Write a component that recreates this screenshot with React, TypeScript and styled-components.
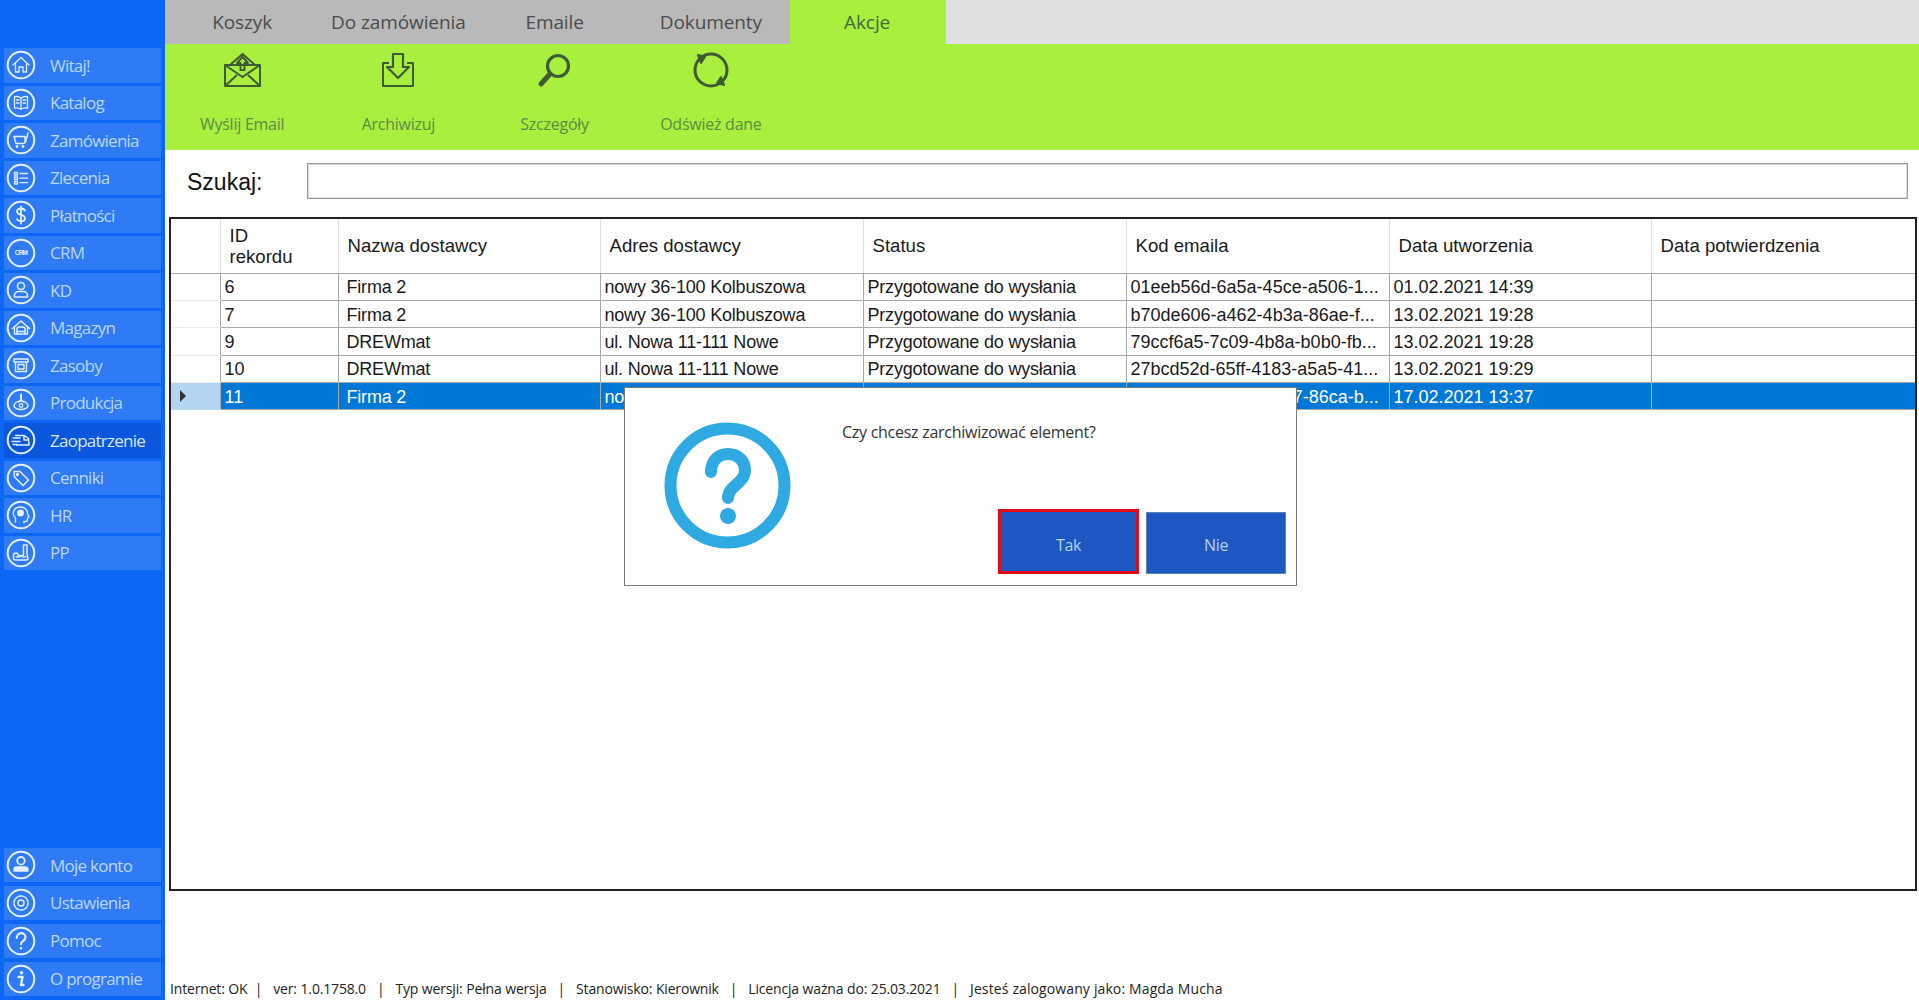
import React, {ReactNode} from 'react';
import styled, {createGlobalStyle} from 'styled-components';

const Global = createGlobalStyle`
  html, body { margin: 0; padding: 0; background: white; }
  * { box-sizing: border-box; }
`;
const uiFont = `"Open Sans", "Noto Sans", sans-serif`;
const gridFont = `"Liberation Sans", Arial, sans-serif`;

const Page = styled.div`
  position: relative;
  display: flex;
  width: 1919px;
  height: 1000px;
  overflow: hidden;
`;
const Sidebar = styled.nav`
  width: 165px;
  flex: none;
  display: flex;
  flex-direction: column;
  justify-content: space-between;
  padding: 48px 4px 4px;
  background: #0c66f6;
`;
const MenuGroup = styled.div<{ $gap: number }>`
  display: flex;
  flex-direction: column;
  gap: ${p => p.$gap}px;
`;
const MenuItem = styled.div<{ $active?: boolean }>`
  height: 34.5px;
  display: flex;
  align-items: center;
  gap: 14px;
  padding-left: 2px;
  background: ${p => p.$active ? '#0a56dc' : '#2f7bf6'};
  color: ${p => p.$active ? '#dbe8ff' : '#bcd6ff'};
  font: 17px/1 ${uiFont};
  letter-spacing: -0.75px;
  svg { flex: none; }
`;
const Main = styled.main`
  flex: 1;
  min-width: 0;
  display: flex;
  flex-direction: column;
`;
const Tabs = styled.div`
  height: 44px;
  display: flex;
  background: #e0e0e0;
`;
const Tab = styled.div<{ $active?: boolean }>`
  width: 156.25px;
  display: flex;
  align-items: center;
  justify-content: center;
  padding-right: 2px;
  background: ${p => p.$active ? '#a9ef3e' : '#b9b9b9'};
  color: ${p => p.$active ? '#46683a' : '#4c4c4c'};
  font: 19px/1 ${uiFont};
  letter-spacing: -0.1px;
`;
const Ribbon = styled.div`
  height: 106px;
  display: flex;
  background: #a9ef3e;
`;
const RibbonButton = styled.div`
  width: 156.25px;
  display: flex;
  flex-direction: column;
  align-items: center;
  padding: 7px 2px 0 0;
  color: #5e8a45;
  font: 16px/1 ${uiFont};
  letter-spacing: -0.25px;
  span { margin-top: 25px; }
`;
const SearchBar = styled.div`
  height: 67px;
  display: flex;
  align-items: center;
  padding: 0 11px 5px 22px;
`;
const SearchLabel = styled.label`
  width: 120px;
  flex: none;
  padding-top: 3px;
  font: 23px/1 ${gridFont};
  color: #111;
`;
const SearchInput = styled.div`
  flex: 1;
  height: 36px;
  border: 1px solid #999;
  box-shadow: inset 0 0 0 1px #ddd;
`;
const GridBox = styled.div`
  height: 674px;
  margin: 0 2px 0 4px;
  border: 2px solid #222;
`;
const Grid = styled.table`
  width: 100%;
  table-layout: fixed;
  border-collapse: collapse;
  color: #1a1a1a;
  font: 18px/1 ${gridFont};
`;
const HeadCell = styled.th`
  height: 54px;
  padding: 0 0 0 9px;
  text-align: left;
  font-weight: 400;
  font-size: 18.6px;
  line-height: 21px;
  white-space: pre-line;
  border-left: 1px solid #e2e2e2;
  border-bottom: 1px solid #a8a8a8;
  &:first-child { border-left: none; }
`;
const Row = styled.tr<{ $selected?: boolean }>`
  height: 27.4px;
  background: ${p => p.$selected ? '#0078d7' : 'white'};
  color: ${p => p.$selected ? 'white' : 'inherit'};
`;
const Cell = styled.td<{ $wordy?: boolean; $inset?: number }>`
  padding: 1px 0 0 ${p => p.$inset || 4}px;
  white-space: nowrap;
  overflow: hidden;
  letter-spacing: ${p => p.$wordy ? '-0.2px' : '0'};
  border-left: 1px solid #a8a8a8;
  border-bottom: 1px solid #a8a8a8;
`;
const RowHead = styled.td<{ $selected?: boolean }>`
  padding: 0 0 0 9px;
  background: ${p => p.$selected ? '#b4d5f0' : 'white'};
  border-bottom: 1px solid ${p => p.$selected ? '#b4d5f0' : '#ececec'};
`;
const Arrow = styled.div`
  width: 0;
  height: 0;
  border-left: 6px solid #333;
  border-top: 6px solid transparent;
  border-bottom: 6px solid transparent;
`;
const StatusBar = styled.footer`
  margin-top: auto;
  height: 21px;
  padding-left: 5px;
  color: #222;
  font: 14px/20px ${uiFont};
  letter-spacing: -0.17px;
  word-spacing: 0.2px;
  white-space: pre;
`;
const StatusUser = styled.span`
  letter-spacing: 0.1px;
`;
const Dialog = styled.div`
  position: absolute;
  left: 624px;
  top: 387px;
  width: 673px;
  height: 199px;
  display: flex;
  background: white;
  border: 1px solid #7a7a7a;
`;
const DialogIcon = styled.div`
  width: 217px;
  flex: none;
  padding: 34px 0 0 39px;
`;
const DialogBody = styled.div`
  flex: 1;
  display: flex;
  flex-direction: column;
  justify-content: space-between;
  padding: 35px 10px 11px 0;
`;
const DialogText = styled.div`
  color: #333;
  font: 16px/1.2 ${uiFont};
  letter-spacing: -0.27px;
`;
const DialogButtons = styled.div`
  display: flex;
  justify-content: flex-end;
  align-items: flex-end;
  gap: 7px;
`;
const DialogButton = styled.div<{ $focused?: boolean }>`
  width: ${p => p.$focused ? 141 : 140}px;
  height: ${p => p.$focused ? 65 : 62}px;
  display: flex;
  align-items: center;
  justify-content: center;
  padding-top: ${p => p.$focused ? 6 : 3}px;
  background: #1d57c1;
  border: ${p => p.$focused ? '3px solid #e30b17' : '1px solid #5f7fb5'};
  color: #b9d0f3;
  font: 16px/1 ${uiFont};
  letter-spacing: -0.3px;
`;

function Ring({children}: { children: ReactNode }) {
	return <svg width="30" height="30" viewBox="0 0 30 30" fill="none" stroke="#e4efff" strokeWidth="1.3" strokeLinecap="round" strokeLinejoin="round">
		<circle cx="15" cy="15" r="13.3" strokeWidth="2"/>
		{children}
	</svg>;
}

const menuIcons: { [K: string]: ReactNode } = {
	home: <><path d="M7 15l8-7.500 8 7.500"/><path d="M9.500 13.500V22h3.500v-5h4v5h3.500v-8.500"/></>,
	book: <><path d="M15 10c-2-1.500-4-1.800-6.500-1.300V20c2.500-.5 4.500-.2 6.500 1.300 2-1.500 4-1.800 6.500-1.300V8.700C19 8.200 17 8.500 15 10z"/><path d="M15 10v11M10.500 12h2.500M10.500 15h2.500M17 12h2.500M17 15h2.500"/></>,
	cart: <><path d="M8 11.500h11v5a2 2 0 0 1-2 2h-7l-2-7z" strokeWidth="1.500"/><path d="M19.500 17l2.500-9" strokeWidth="1.500"/><circle cx="11" cy="21.500" r=".8"/><circle cx="17" cy="21.500" r=".8"/></>,
	list: <path d="M8.500 9.500h3V12h-3zM8.500 14h3v2.500h-3zM8.500 18.500h3V21h-3zM14 10.500h7.500M14 15.200h7.500M14 19.700h7.500"/>,
	dollar: <path d="M19 10.500c-.7-1.300-2.200-2-4-2-2.200 0-4 1.100-4 3s1.800 2.700 4 3.300 4 1.400 4 3.400-1.800 3-4 3c-1.800 0-3.300-.7-4-2M15 6.500v17" strokeWidth="1.800"/>,
	crm: <text x="15" y="17.300" fill="#e4efff" stroke="none" fontSize="6.500" fontWeight="700" textAnchor="middle" fontFamily="Liberation Sans, sans-serif">CRM</text>,
	person: <><circle cx="15" cy="11" r="3.500" strokeWidth="1.600"/><path d="M8.500 22v-1.500c0-2.500 2-4 4-4h5c2 0 4 1.500 4 4V22z" strokeWidth="1.600"/></>,
	warehouse: <><path d="M6.500 15.500L15 8l8.500 7.500" strokeWidth="1.600"/><path d="M8.500 14.500V21h13v-6.500"/><path d="M11 21v-5a2 2 0 0 1 2-2h4a2 2 0 0 1 2 2v5M11 18.500h8" strokeWidth="1.500"/></>,
	box: <path d="M8 9h14v3H8zM9.500 12v9.500h11V12zM12 14.500h6v4.500h-6z" strokeWidth="1.400"/>,
	lamp: <><path d="M15 6.500v6" strokeWidth="2"/><path d="M12.500 14l2.500-2 2.500 2"/><path d="M8 18a7 5 0 0 1 14 0c0 1.500-3 3.500-7 3.500s-7-2-7-3.500z" strokeWidth="1.400"/><circle cx="15" cy="17.500" r="1.800"/></>,
	truck: <><path d="M9.500 10.500h9l4 3 .5 6.500H10.500" strokeWidth="1.500"/><path d="M7 13h7M6 16.500h8M7 19.500h4M18 11v4h4.500" strokeWidth="1.500"/></>,
	tag: <><path d="M8 8.500h6l8.500 8.500-5.500 5.500L8.500 14z" strokeWidth="1.500"/><circle cx="11.500" cy="11.500" r="1"/></>,
	head: <><path d="M9.500 22v-4c-2-2-2.500-4-2-6 .7-3 3.500-5 7-5 3.800 0 7 2.500 7 6.500 0 1 1.500 3 1.500 3.500s-1.500.5-1.500 1V20c0 1-1 1.500-2 1.500h-1.500V23"/><circle cx="14.500" cy="13" r="3.500" fill="#e4efff" stroke="none"/></>,
	machine: <><path d="M17.500 7H21v9l1 4.500c0 1-1 1.500-2 1.500H9.500c-1 0-2-.5-2-1.500v-3c0-1.500 1-2.500 2.500-2.500s2 1 2 2.500h5.500z" strokeWidth="1.500"/><path d="M10 18.500c1.500 1.500 3 0 5 0s3 1.500 5 0" strokeWidth="1.200"/></>,
	account: <><circle cx="15" cy="10.800" r="3.800" strokeWidth="1.800"/><path d="M8 19.500c0-1.500 1.500-2.500 3-2.500h8c1.500 0 3 1 3 2.500V21H8z" fill="#e4efff"/></>,
	gear: <><circle cx="15" cy="15" r="3" strokeWidth="1.500"/><circle cx="15" cy="15" r="7" strokeWidth="1.500" strokeDasharray="3 1.400"/></>,
	question: <><path d="M10.800 12c0-3 2-4.800 4.400-4.800s4.300 1.700 4.300 4c0 3.500-4.500 3.700-4.500 7" strokeWidth="2.200"/><circle cx="15" cy="22.300" r="1.200" fill="#e4efff" stroke="none"/></>,
	info: <><circle cx="15.500" cy="8.800" r="1.800" fill="#e4efff" stroke="none"/><path d="M12.500 13h4l-1.500 8h2.500" strokeWidth="2.400"/></>,
};

const topMenu: [string, string][] = [
	['Witaj!', 'home'], ['Katalog', 'book'], ['Zamówienia', 'cart'], ['Zlecenia', 'list'],
	['Płatności', 'dollar'], ['CRM', 'crm'], ['KD', 'person'], ['Magazyn', 'warehouse'],
	['Zasoby', 'box'], ['Produkcja', 'lamp'], ['Zaopatrzenie', 'truck'], ['Cenniki', 'tag'],
	['HR', 'head'], ['PP', 'machine'],
];
const bottomMenu: [string, string][] = [
	['Moje konto', 'account'], ['Ustawienia', 'gear'], ['Pomoc', 'question'], ['O programie', 'info'],
];
const tabs = ['Koszyk', 'Do zamówienia', 'Emaile', 'Dokumenty', 'Akcje'];
const columns: [string, number][] = [
	['', 49], ['ID\nrekordu', 118], ['Nazwa dostawcy', 262], ['Adres dostawcy', 263], ['Status', 263],
	['Kod emaila', 263], ['Data utworzenia', 262], ['Data potwierdzenia', 264],
];
const rows = [
	['6', 'Firma 2', 'nowy 36-100 Kolbuszowa', 'Przygotowane do wysłania', '01eeb56d-6a5a-45ce-a506-1...', '01.02.2021 14:39'],
	['7', 'Firma 2', 'nowy 36-100 Kolbuszowa', 'Przygotowane do wysłania', 'b70de606-a462-4b3a-86ae-f...', '13.02.2021 19:28'],
	['9', 'DREWmat', 'ul. Nowa 11-111 Nowe', 'Przygotowane do wysłania', '79ccf6a5-7c09-4b8a-b0b0-fb...', '13.02.2021 19:28'],
	['10', 'DREWmat', 'ul. Nowa 11-111 Nowe', 'Przygotowane do wysłania', '27bcd52d-65ff-4183-a5a5-41...', '13.02.2021 19:29'],
	['11', 'Firma 2', 'nowy 36-100 Kolbuszowa', 'Przygotowane do wysłania', 'e1a2b3d4-99e1-4e67-86ca-b...', '17.02.2021 13:37'],
];
const ribbonProps = {width: 40, height: 40, viewBox: '0 0 40 40', fill: 'none', stroke: '#3f5b33', strokeWidth: 2, strokeLinejoin: 'round' as const};
const ribbon: [string, ReactNode][] = [
	['Wyślij Email', <svg {...ribbonProps}>
		<path d="M3 14h35v21H3zM3 14l17.500 12L38 14M3 35l12-11M38 35L26 24"/>
		<path d="M8 14L20.500 3 33 14M15 12h3.500v7h4v-7H26l-5.500-6z"/>
	</svg>],
	['Archiwizuj', <svg {...ribbonProps}>
		<path d="M11 12H5v23h30V12h-6"/>
		<path d="M15 3h10v13h6L20 27 9 16h6z" strokeWidth="2.200"/>
	</svg>],
	['Szczegóły', <svg {...ribbonProps}>
		<circle cx="23" cy="15" r="10.500" strokeWidth="3.200"/>
		<path d="M15 23L6 33" strokeWidth="5" strokeLinecap="round"/>
	</svg>],
	['Odśwież dane', <svg {...ribbonProps}>
		<circle cx="20" cy="19" r="16" strokeWidth="3"/>
		<path d="M7 4l7 2-4 6zM33 34l-7-2 4-6z" fill="#3f5b33"/>
	</svg>],
];
const status = 'Internet: OK  |   ver: 1.0.1758.0   |   Typ wersji: Pełna wersja   |   Stanowisko: Kierownik   |   Licencja ważna do: 25.03.2021   |   ';

function App() {
	return (
		<Page>
			<Global/>
			<Sidebar>
				<MenuGroup $gap={3}>
					{topMenu.map(([label, icon]) =>
						<MenuItem key={label} $active={label === 'Zaopatrzenie'}>
							<Ring>{menuIcons[icon]}</Ring>{label}
						</MenuItem>
					)}
				</MenuGroup>
				<MenuGroup $gap={3.4}>
					{bottomMenu.map(([label, icon]) =>
						<MenuItem key={label}>
							<Ring>{menuIcons[icon]}</Ring>{label}
						</MenuItem>
					)}
				</MenuGroup>
			</Sidebar>
			<Main>
				<Tabs>
					{tabs.map(t => <Tab key={t} $active={t === 'Akcje'}>{t}</Tab>)}
				</Tabs>
				<Ribbon>
					{ribbon.map(([label, icon]) =>
						<RibbonButton key={label}>{icon}<span>{label}</span></RibbonButton>
					)}
				</Ribbon>
				<SearchBar>
					<SearchLabel>Szukaj:</SearchLabel>
					<SearchInput/>
				</SearchBar>
				<GridBox>
					<Grid>
						<colgroup>
							{columns.map(([name, width]) => <col key={name} width={width}/>)}
						</colgroup>
						<thead>
							<tr>
								{columns.map(([name]) => <HeadCell key={name}>{name}</HeadCell>)}
							</tr>
						</thead>
						<tbody>
							{rows.map((r, i) => {
								const selected = i === rows.length - 1;
								return <Row key={r[0]} $selected={selected}>
									<RowHead $selected={selected}>{selected && <Arrow/>}</RowHead>
									{r.map((v, j) => <Cell key={j} $wordy={j >= 1 && j <= 3} $inset={j === 1 ? 8 : 4}>{v}</Cell>)}
									<Cell/>
								</Row>;
							})}
						</tbody>
					</Grid>
				</GridBox>
				<StatusBar>{status}<StatusUser>Jesteś zalogowany jako: Magda Mucha</StatusUser></StatusBar>
			</Main>
			<Dialog>
				<DialogIcon>
					<svg width="127" height="127" viewBox="0 0 127 127" fill="none" stroke="#2ea9e1">
						<circle cx="63.500" cy="63.500" r="57" strokeWidth="12"/>
						<path d="M47 50c0-11 7-18 17-18s17 7 17 16c0 14-17 15-17 28" strokeWidth="12" strokeLinecap="round"/>
						<circle cx="64" cy="94" r="8" fill="#2ea9e1" stroke="none"/>
					</svg>
				</DialogIcon>
				<DialogBody>
					<DialogText>Czy chcesz zarchiwizować element?</DialogText>
					<DialogButtons>
						<DialogButton $focused>Tak</DialogButton>
						<DialogButton>Nie</DialogButton>
					</DialogButtons>
				</DialogBody>
			</Dialog>
		</Page>
	);
}

export default App;
